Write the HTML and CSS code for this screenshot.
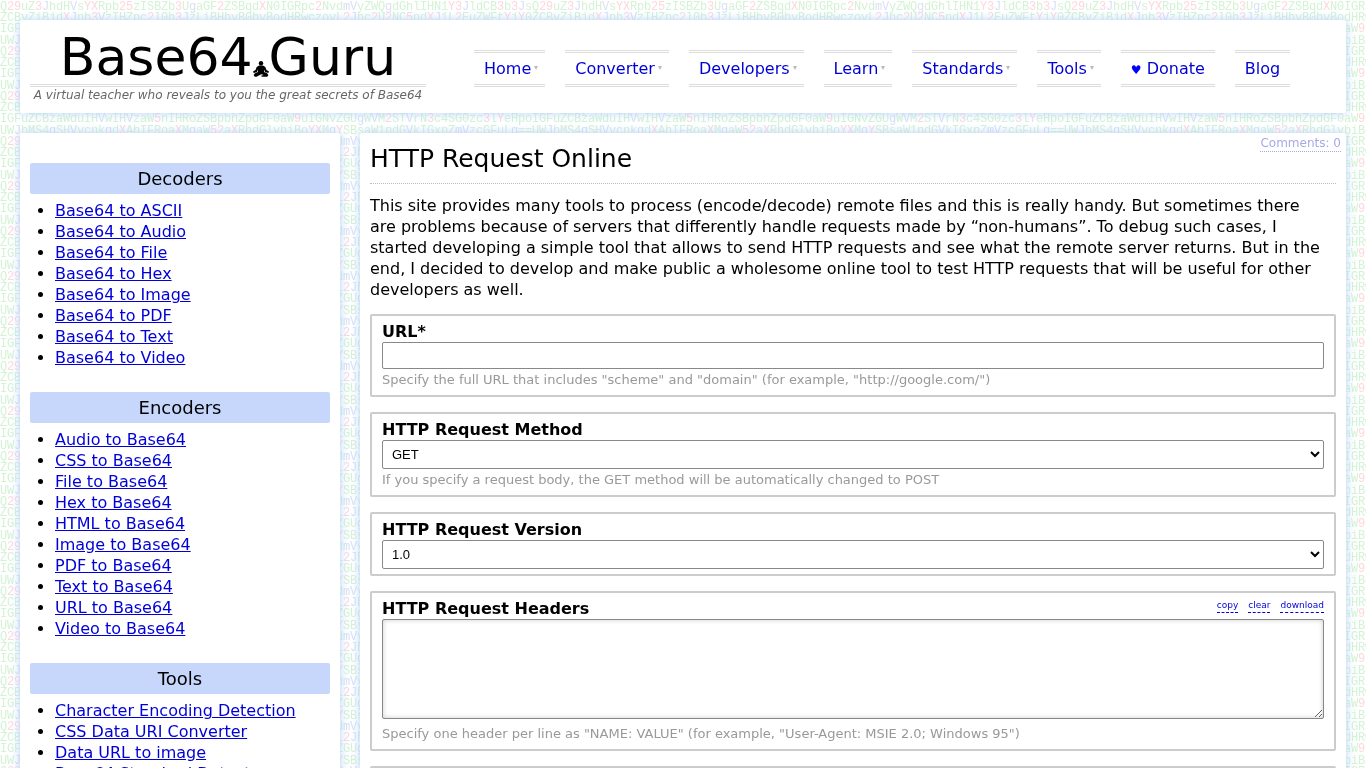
FILE: index.html
```html
<!DOCTYPE html>
<html lang="en">
<head>
    <meta charset="UTF-8">
    <meta name="viewport" content="width=device-width, initial-scale=1.0">
    <title>HTTP Request Online | Base64.Guru</title>
    <link rel="stylesheet" href="styles.css">
</head>
<body>
    <!-- Page backdrop: repeating Base64 text -->
    <svg class="backdrop" aria-hidden="true">
        <defs>
            <pattern id="code" width="532" height="45" patternUnits="userSpaceOnUse"></pattern>
        </defs>
        <rect width="100%" height="100%" fill="url(#code)"/>
    </svg>

    <header class="header">
        <div class="brand">
            <a class="logo" href="#">Base64<svg class="guru" viewBox="0 0 16 16" width="16" height="16"><circle cx="8" cy="2.2" r="2.2"/><path d="M6 4.400h4L12.300 6l1.200 3 2.500 1.500-.7 1.600-3.300-1L11 8.600V11l3 1.200 1.400 1.700-1.200 1.800H9.600L7.400 15l3.400-1-2.600-.8-4.700 2.500H1.800L.6 13.900 2 12.200 5 11V8.600L4 11.100l-3.300 1L0 10.500 2.500 9l1.200-3z"/></svg>Guru</a>
            <p class="slogan">A virtual teacher who reveals to you the great secrets of Base64</p>
        </div>
        <nav class="menu">
            <a class="has-sub" href="#">Home</a>
            <a class="has-sub" href="#">Converter</a>
            <a class="has-sub" href="#">Developers</a>
            <a class="has-sub" href="#">Learn</a>
            <a class="has-sub" href="#">Standards</a>
            <a class="has-sub" href="#">Tools</a>
            <a href="#"><span class="heart">♥</span> Donate</a>
            <a href="#">Blog</a>
        </nav>
    </header>

    <div class="columns">
        <aside class="sidebar">
            <h3>Decoders</h3>
            <ul>
                <li><a href="#">Base64 to ASCII</a></li>
                <li><a href="#">Base64 to Audio</a></li>
                <li><a href="#">Base64 to File</a></li>
                <li><a href="#">Base64 to Hex</a></li>
                <li><a href="#">Base64 to Image</a></li>
                <li><a href="#">Base64 to PDF</a></li>
                <li><a href="#">Base64 to Text</a></li>
                <li><a href="#">Base64 to Video</a></li>
            </ul>
            <h3>Encoders</h3>
            <ul>
                <li><a href="#">Audio to Base64</a></li>
                <li><a href="#">CSS to Base64</a></li>
                <li><a href="#">File to Base64</a></li>
                <li><a href="#">Hex to Base64</a></li>
                <li><a href="#">HTML to Base64</a></li>
                <li><a href="#">Image to Base64</a></li>
                <li><a href="#">PDF to Base64</a></li>
                <li><a href="#">Text to Base64</a></li>
                <li><a href="#">URL to Base64</a></li>
                <li><a href="#">Video to Base64</a></li>
            </ul>
            <h3>Tools</h3>
            <ul>
                <li><a href="#">Character Encoding Detection</a></li>
                <li><a href="#">CSS Data URI Converter</a></li>
                <li><a href="#">Data URL to image</a></li>
                <li><a href="#">Base64 Standard Detector</a></li>
            </ul>
        </aside>

        <main class="content">
            <a class="comments" href="#">Comments: 0</a>
            <h1>HTTP Request Online</h1>
            <p class="intro">This site provides many tools to process (encode/decode) remote files and this is really handy. But sometimes there are problems because of servers that differently handle requests made by “non-humans”. To debug such cases, I started developing a simple tool that allows to send HTTP requests and see what the remote server returns. But in the end, I decided to develop and make public a wholesome online tool to test HTTP requests that will be useful for other developers as well.</p>
            <form>
                <div class="field">
                    <label for="url">URL*</label>
                    <input type="text" id="url">
                    <p class="hint">Specify the full URL that includes "scheme" and "domain" (for example, "http://google.com/")</p>
                </div>
                <div class="field">
                    <label for="method">HTTP Request Method</label>
                    <select id="method">
                        <option>GET</option>
                        <option>POST</option>
                    </select>
                    <p class="hint">If you specify a request body, the GET method will be automatically changed to POST</p>
                </div>
                <div class="field">
                    <label for="version">HTTP Request Version</label>
                    <select id="version">
                        <option>1.0</option>
                        <option>1.1</option>
                    </select>
                </div>
                <div class="field">
                    <div class="field-head">
                        <label for="headers">HTTP Request Headers</label>
                        <div class="actions">
                            <a href="#">copy</a>
                            <a href="#">clear</a>
                            <a href="#">download</a>
                        </div>
                    </div>
                    <textarea id="headers"></textarea>
                    <p class="hint">Specify one header per line as "NAME: VALUE" (for example, "User-Agent: MSIE 2.0; Windows 95")</p>
                </div>
                <div class="field">
                    <textarea aria-label="HTTP Request Body"></textarea>
                </div>
            </form>
        </main>
    </div>

    <script src="backdrop.js"></script>
</body>
</html>
```
FILE: backdrop.js
```javascript
// Fill the backdrop tile with Base64 text, one glyph per 7px cell
const lines = [
    { y: 10, text: 'Q29uZ3JhdHVsYXRpb25zISBZb3UgaGF2ZSBqdXN0IGRpc2NvdmVyZWQgdGhlIHN1Y3JldCB3b3Js' },
    { y: 21, text: 'ZCBvZiBjdXJpb3VzIHZpc2l0b3JzLiBHbyB0byBodHRwczovL2Jhc2U2NC5ndXJ1L2EuZWFtYjY0' },
    { y: 32, text: 'IGFuZCBzaWduIHVwIHVzaW5nIHRoZSBpbnZpdGF0aW9uIGNvZGUgWVM2STVrN3c4SG0zc3lYeHpo' },
    { y: 44, text: 'UWJhMS4gSHVycnkgdXAhIFRoaXMgaW52aXRhdGlvbiBoYXMgYSBsaW1pdGVkIGxpZmVzcGFuLg==' }
];
const cell = 7;
const svgNS = 'http://www.w3.org/2000/svg';
const tile = document.getElementById('code');

lines.forEach(function (line) {
    const row = document.createElementNS(svgNS, 'text');
    row.setAttribute('y', line.y);
    line.text.split('').forEach(function (char, i) {
        const glyph = document.createElementNS(svgNS, 'tspan');
        glyph.setAttribute('x', i * cell);
        if (/[2359XY]/.test(char)) {
            glyph.setAttribute('class', 'pink');
        } else if (/[JVgm]/.test(char)) {
            glyph.setAttribute('class', 'violet');
        }
        glyph.textContent = char;
        row.appendChild(glyph);
    });
    tile.appendChild(row);
});
```
FILE: styles.css
```css
* {
    box-sizing: border-box;
}

body {
    margin: 0;
    padding: 20px;
    font: 16px/21px Verdana, "DejaVu Sans", sans-serif;
    color: #000;
    background: #fff;
}

a {
    color: #0000d8;
}

/* Backdrop */
.backdrop {
    position: fixed;
    top: 0;
    left: 0;
    z-index: -1;
    width: 100%;
    height: 100%;
    font: 12px "Liberation Mono", monospace;
    fill: #d4f2d4;
}

.backdrop .pink {
    fill: #fcd8de;
}

.backdrop .violet {
    fill: #dadff4;
}

.header,
.sidebar,
.content {
    background: #fff;
    border-radius: 2px;
    box-shadow: 0 0 10px #b4d2fa;
}

/* Header */
.header {
    display: flex;
    align-items: center;
    gap: 48px;
    padding: 10px;
    margin-bottom: 20px;
}

.brand {
    flex: 0 0 396px;
    text-align: center;
}

.logo {
    display: block;
    border-bottom: 3px double #ddd;
    font-size: 52px;
    line-height: 54px;
    color: #000;
    text-decoration: none;
}

.guru {
    vertical-align: -2px;
}

.slogan {
    margin: 0;
    font-size: 12px;
    line-height: 16px;
    font-style: italic;
    color: #666;
}

.menu {
    display: flex;
    gap: 20px;
    padding-top: 4px;
    white-space: nowrap;
}

.menu a {
    position: relative;
    padding: 5px 10px;
    border-top: 3px double #ddd;
    border-bottom: 3px double #ddd;
    text-decoration: none;
}

.menu .has-sub {
    padding-right: 14px;
}

.menu .has-sub::after {
    content: "";
    position: absolute;
    top: 13px;
    right: 7px;
    border: 2px solid transparent;
    border-top: 4px solid #bbb;
    border-bottom: 0;
}

.heart {
    font-size: 12px;
    line-height: 12px;
    color: #00f;
}

.columns {
    display: flex;
    align-items: flex-start;
    gap: 20px;
}

/* Sidebar */
.sidebar {
    flex: 0 0 320px;
    padding: 30px 10px;
}

.sidebar h3 {
    margin: 0 0 6px;
    padding: 5px;
    border-radius: 2px;
    font-size: 18px;
    line-height: 21px;
    font-weight: normal;
    text-align: center;
    background: #c6d7fb;
}

.sidebar ul {
    margin: 0 0 24px;
    padding-left: 25px;
}

/* Main column */
.content {
    position: relative;
    flex: 1;
    padding: 10px;
}

.comments {
    position: absolute;
    top: 2px;
    right: 5px;
    border-bottom: 1px dotted #a8a8e8;
    font-size: 12px;
    line-height: 16px;
    color: #a8a8e8;
    text-decoration: none;
}

.content h1 {
    margin: 0 0 11px;
    padding-bottom: 9px;
    border-bottom: 1px dotted #bbb;
    font-size: 25px;
    line-height: 31px;
    font-weight: normal;
}

.intro {
    margin: 0 0 14px;
    padding-right: 10px;
}

/* Form */
.field {
    margin-bottom: 15px;
    padding: 5px 10px;
    border: 2px solid #ccc;
    border-radius: 2px;
}

.field-head {
    display: flex;
    justify-content: space-between;
    align-items: flex-start;
}

.actions {
    display: flex;
    gap: 10px;
    font-size: 9px;
    line-height: 14px;
}

.actions a {
    border-bottom: 1px dashed #0000d8;
    text-decoration: none;
}

label {
    display: block;
    font-weight: bold;
}

input,
select,
textarea {
    display: block;
    width: 100%;
    border: 1px solid #888;
    border-radius: 2px;
    background: #fff;
    font: 13px "Liberation Sans", Arial, sans-serif;
}

input {
    height: 27px;
    padding: 0 5px;
}

select {
    height: 29px;
    padding-left: 5px;
}

textarea {
    height: 100px;
    margin-bottom: 4px;
    padding: 5px;
    box-shadow: inset 0 0 5px #ccc;
}

.hint {
    margin: 0;
    font-size: 13px;
    color: #999;
}
```
